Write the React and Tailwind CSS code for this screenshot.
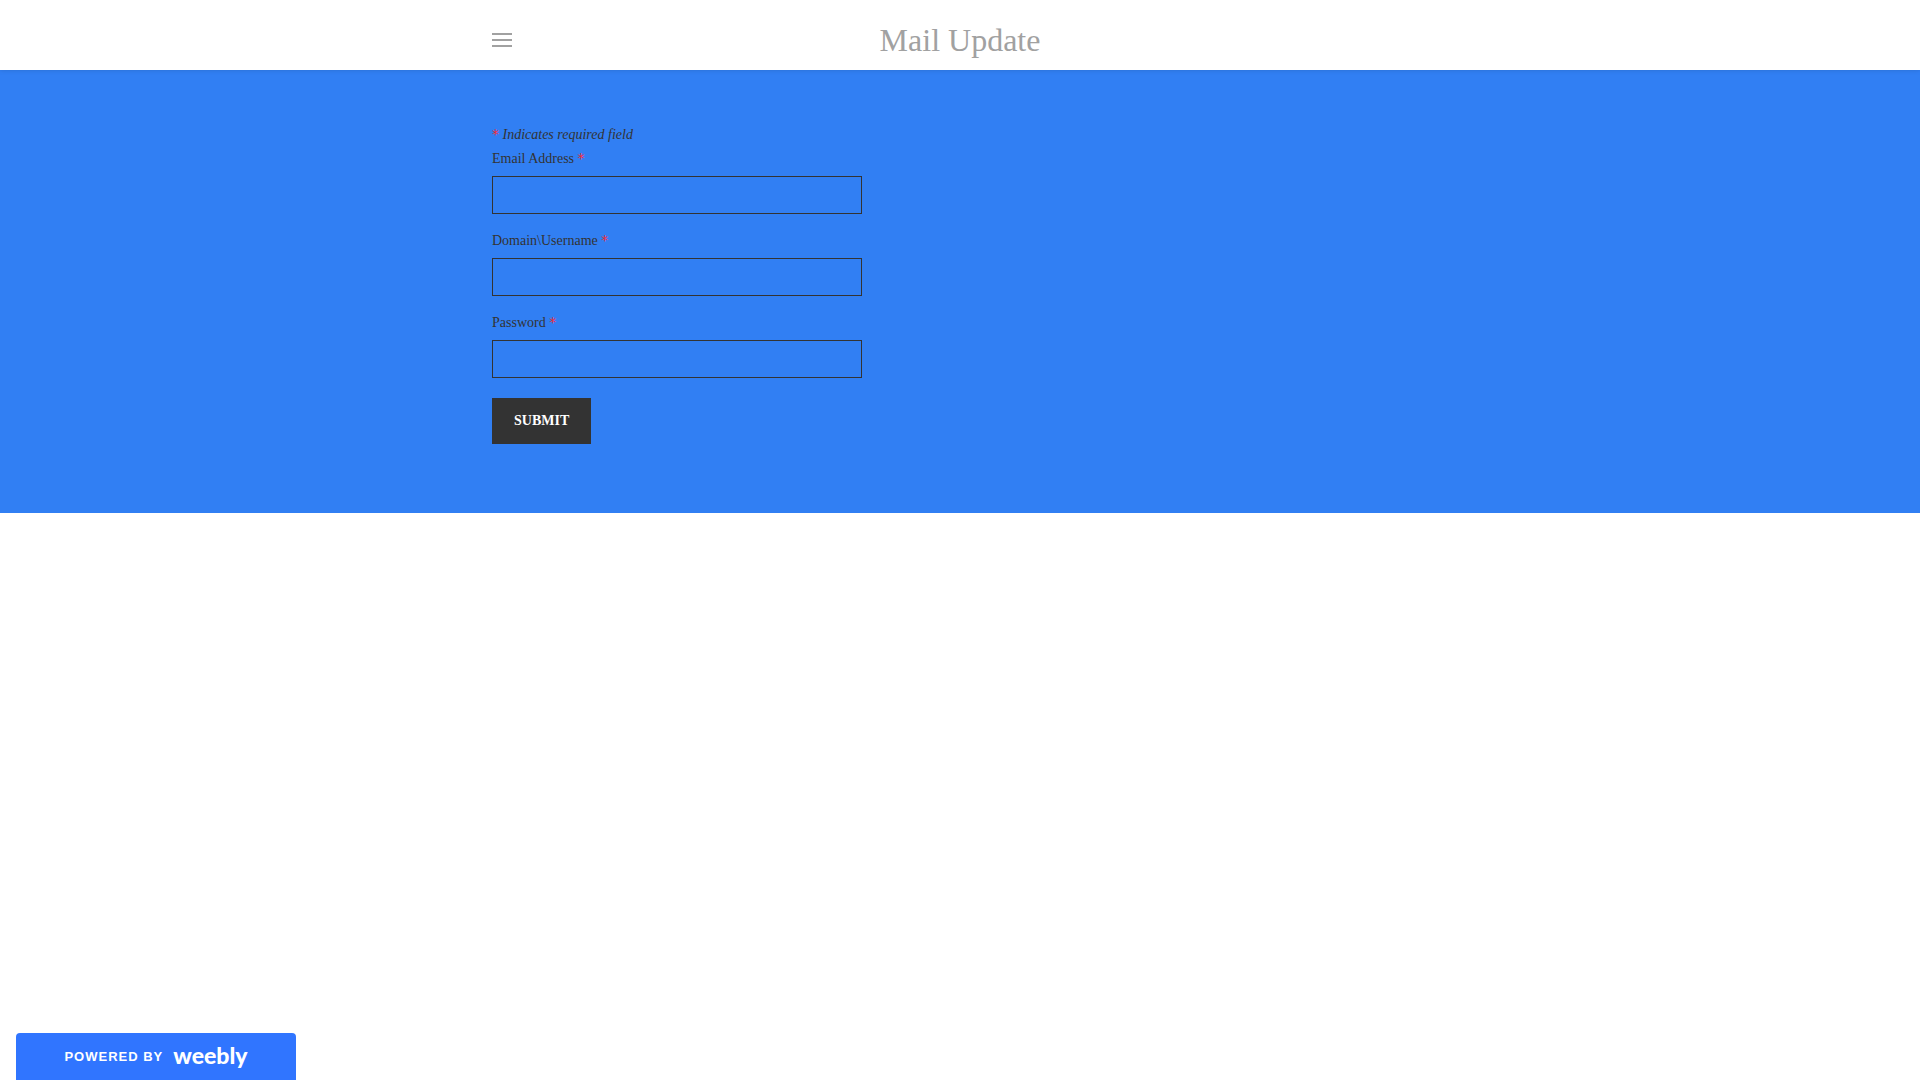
import { useState } from 'react';

const FIELDS = [
  { id: 'email', label: 'Email Address', type: 'text' },
  { id: 'username', label: 'Domain\\Username', type: 'text' },
  { id: 'password', label: 'Password', type: 'password' },
];

function Header() {
  return (
    <header className="relative z-10 bg-white shadow-[0_0_5px_rgba(0,0,0,0.15)]">
      <div className="max-w-[960px] h-[70px] mx-auto px-3 pt-2.5 grid grid-cols-[1fr_auto_1fr] items-center">
        <button type="button" aria-label="Menu" className="w-5 flex flex-col gap-1 cursor-pointer">
          <span className="block w-full h-0.5 bg-[#a1a1a1]" />
          <span className="block w-full h-0.5 bg-[#a1a1a1]" />
          <span className="block w-full h-0.5 bg-[#a1a1a1]" />
        </button>
        <a href="#" className="text-[32px] leading-10 text-[#a1a1a1]">
          Mail Update
        </a>
      </div>
    </header>
  );
}

function Required() {
  return (
    <span className="font-['DejaVu_Sans',sans-serif] leading-[0px] not-italic text-[#f52c38]">*</span>
  );
}

function Field({ id, label, type, value, onChange }) {
  return (
    <div className="mb-5">
      <label htmlFor={id} className="block mb-2.5 text-sm leading-[14px]">
        {label} <Required />
      </label>
      <input
        id={id}
        name={id}
        type={type}
        value={value}
        onChange={onChange}
        className="block w-full max-w-[370px] h-[38px] px-2.5 border border-[#333333] bg-transparent outline-none"
      />
    </div>
  );
}

export default function App() {
  const [values, setValues] = useState({ email: '', username: '', password: '' });

  return (
    <div className="min-h-screen bg-white text-[#333333] font-['Liberation_Serif',serif]">
      <Header />

      {/* Form section */}
      <main className="bg-[#317ff3]">
        <form
          onSubmit={(e) => e.preventDefault()}
          className="max-w-[960px] mx-auto px-3 pt-[58px] pb-[69px]"
        >
          <p className="mb-2.5 text-sm leading-[14px] italic">
            <Required /> Indicates required field
          </p>
          {FIELDS.map((field) => (
            <Field
              key={field.id}
              {...field}
              value={values[field.id]}
              onChange={(e) => setValues({ ...values, [field.id]: e.target.value })}
            />
          ))}
          <button
            type="submit"
            className="block h-[46px] px-[22px] bg-[#333333] text-white text-sm font-bold uppercase cursor-pointer"
          >
            Submit
          </button>
        </form>
      </main>

      {/* Footer badge */}
      <a
        href="#"
        className="fixed bottom-0 left-4 w-[280px] h-[47px] flex items-center justify-center gap-2.5 rounded-t bg-[#3075ff] text-white"
      >
        <span className="font-['Liberation_Sans',sans-serif] text-[13px] font-bold tracking-[1px]">
          POWERED BY
        </span>
        <span className="pb-1 font-['Lato',sans-serif] text-[23px] leading-7 font-black">weebly</span>
      </a>
    </div>
  );
}
